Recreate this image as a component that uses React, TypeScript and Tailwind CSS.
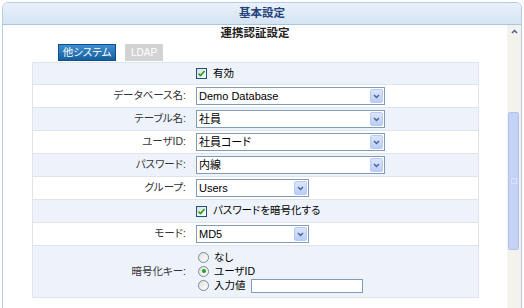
import React from 'react';

const jp = "font-['Liberation_Sans','Noto_Sans_CJK_JP',sans-serif] [font-feature-settings:'palt']";

function Select({ value, width }: { value: string; width: string }) {
  return (
    <div className={`flex h-[18px] items-center border border-[#7f9db9] bg-white ${width}`}>
      <span className="flex-1 truncate pl-[2px] text-[11px] leading-[16px] text-black">{value}</span>
      <span className="mr-[1px] flex h-[14px] w-[13px] items-center justify-center rounded-[2px] border border-[#b9c9ef] bg-gradient-to-b from-[#dbe6fd] to-[#b9cdf8]">
        <svg width="7" height="5" viewBox="0 0 7 5">
          <path d="M1 1 L3.5 3.5 L6 1" stroke="#4d6185" strokeWidth="1.4" fill="none" />
        </svg>
      </span>
    </div>
  );
}

function Check() {
  return (
    <span className="flex h-[11px] w-[11px] items-center justify-center border border-[#1c5180] bg-gradient-to-br from-[#dcdcd7] to-white">
      <svg width="7" height="7" viewBox="0 0 7 7">
        <path d="M0.5 3.5 L2.5 5.5 L6.5 1" stroke="#21a121" strokeWidth="1.6" fill="none" />
      </svg>
    </span>
  );
}

function Radio({ on }: { on?: boolean }) {
  return (
    <span className="flex h-[11px] w-[11px] items-center justify-center rounded-full border border-[#7a8a99] bg-gradient-to-br from-[#e0e0da] to-white">
      {on && <span className="h-[4px] w-[4px] rounded-full bg-[#21a121]" />}
    </span>
  );
}

function Row({ label, bg, h = 'h-[23px]', children }: { label?: string; bg: string; h?: string; children: React.ReactNode }) {
  return (
    <div className={`flex border-t border-[#dfe4ea] ${bg} ${h}`}>
      <div className="flex w-[157px] shrink-0 items-center justify-end pr-[4px] text-[10.5px] text-[#333]">{label}</div>
      <div className="flex flex-1 items-center pl-[6px]">{children}</div>
    </div>
  );
}

export default function App() {
  const blue = 'bg-[#eef3fb]';
  const white = 'bg-white';
  return (
    <div className={`h-[308px] w-[524px] overflow-hidden bg-white px-[2px] pt-[2px] ${jp}`}>
      <div className="flex h-[310px] flex-col rounded-t-[6px] border border-[#b5cbe6]">
        <div className="flex h-[22px] shrink-0 items-center justify-center rounded-t-[6px] border-b border-[#a9c3e2] bg-gradient-to-b from-[#eaf1fa] to-[#d5e3f3] text-[11.5px] font-bold text-[#23437a]">
          基本設定
        </div>
        <div className="flex flex-1">
          <div className="flex-1">
            <div className="pt-[1px] text-center text-[11.5px] font-bold leading-[14px] text-[#222]">連携認証設定</div>
            <div className="mt-[4px] flex gap-[9px] pl-[55px]">
              <div className="flex h-[17px] w-[58px] items-center justify-center border border-[#0c4f8c] bg-gradient-to-b from-[#3c8fd0] to-[#155f9f] text-[10.5px] text-white">
                他システム
              </div>
              <div className="flex h-[17px] w-[38px] items-center justify-center bg-[#d3d3d3] text-[10px] text-white">
                LDAP
              </div>
            </div>
            <div className="ml-[29px] mt-[1px] w-[447px] border-x border-b border-[#dfe4ea]">
              <Row bg={blue} h="h-[22px]">
                <div className="flex items-center gap-[6px] text-[10.5px]">
                  <Check />
                  <span>有効</span>
                </div>
              </Row>
              <Row label="データベース名:" bg={white}>
                <Select value="Demo Database" width="w-[189px]" />
              </Row>
              <Row label="テーブル名:" bg={blue}>
                <Select value="社員" width="w-[189px]" />
              </Row>
              <Row label="ユーザID:" bg={white}>
                <Select value="社員コード" width="w-[189px]" />
              </Row>
              <Row label="パスワード:" bg={blue}>
                <Select value="内線" width="w-[189px]" />
              </Row>
              <Row label="グループ:" bg={white}>
                <Select value="Users" width="w-[113px]" />
              </Row>
              <Row bg={blue}>
                <div className="flex items-center gap-[6px] text-[10.5px]">
                  <Check />
                  <span>パスワードを暗号化する</span>
                </div>
              </Row>
              <Row label="モード:" bg={white}>
                <Select value="MD5" width="w-[113px]" />
              </Row>
              <Row label="暗号化キー:" bg={blue} h="h-[52px]">
                <div className="flex flex-col gap-[1px] pl-[2px] text-[10.5px] leading-[13px]">
                  <div className="flex items-center gap-[5px]">
                    <Radio />
                    <span>なし</span>
                  </div>
                  <div className="flex items-center gap-[5px]">
                    <Radio on />
                    <span>ユーザID</span>
                  </div>
                  <div className="flex items-center gap-[5px]">
                    <Radio />
                    <span>入力値</span>
                    <span className="h-[14px] w-[112px] border border-[#7f9db9] bg-white" />
                  </div>
                </div>
              </Row>
            </div>
          </div>
          <div className="flex w-[14px] flex-col bg-[#f4f2ec]">
            <div className="mx-[1px] mt-[1px] flex h-[10px] items-center justify-center">
              <svg width="7" height="5" viewBox="0 0 7 5">
                <path d="M1 4 L3.5 1.5 L6 4" stroke="#4d6185" strokeWidth="1.5" fill="none" />
              </svg>
            </div>
            <div className="ml-[1px] mr-[2px] mt-[76px] flex h-[138px] items-center justify-center rounded-[2px] border border-[#b3c3ee] bg-[#c4d2f7]">
              <span className="h-[6px] w-[6px] border border-[#d8e1fa]" />
            </div>
          </div>
        </div>
      </div>
    </div>
  );
}
